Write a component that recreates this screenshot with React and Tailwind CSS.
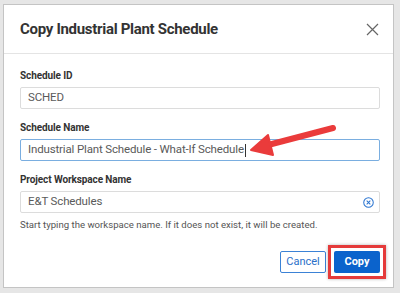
import React from 'react';

function Field({ label, value, focused, clearable, caret }) {
  return (
    <div className="flex flex-col">
      <label className="text-[10px] font-bold text-[#333] leading-[14px] mb-[4px] tracking-[-0.1px]">{label}</label>
      <div
        className={`h-[22px] flex items-center pl-[7px] pr-[5px] border rounded-[2px] ${
          focused ? 'border-[#7aaee0]' : 'border-[#dcdcdc]'
        }`}
      >
        <span className="text-[11.5px] text-[#5a5a5a] leading-none whitespace-nowrap tracking-[-0.15px]">{value}</span>
        {caret && <span className="w-px h-[13px] bg-[#333] ml-px" />}
        {clearable && (
          <svg className="ml-auto" width="11" height="11" viewBox="0 0 12 12" fill="none">
            <circle cx="6" cy="6" r="5.2" stroke="#2a74d0" strokeWidth="1.1" />
            <path d="M4 4L8 8M8 4L4 8" stroke="#2a74d0" strokeWidth="1.1" />
          </svg>
        )}
      </div>
    </div>
  );
}

export default function App() {
  return (
    <div
      className="w-[400px] h-[293px] bg-[#e6e6e6] pl-[3px] pt-[4px] pr-[6px] pb-[5px] overflow-hidden"
      style={{ fontFamily: 'Roboto, "Liberation Sans", sans-serif' }}
    >
      <div className="relative w-[391px] h-[284px] bg-white border border-[#c4c4c4] flex flex-col">
        {/* Header */}
        <div className="h-[49px] flex items-center justify-between pl-[16px] pr-[14px] border-b border-[#e4e4e4]">
          <h2 className="text-[15px] font-bold text-[#333] tracking-[-0.3px]">Copy Industrial Plant Schedule</h2>
          <svg width="13" height="13" viewBox="0 0 13 13">
            <path d="M1 1L12 12M12 1L1 12" stroke="#666" strokeWidth="1.2" />
          </svg>
        </div>

        {/* Body */}
        <div className="flex flex-col gap-[12px] pl-[16px] pr-[13px] pt-[15px]">
          <Field label="Schedule ID" value="SCHED" />
          <Field label="Schedule Name" value="Industrial Plant Schedule - What-If Schedule" focused caret />
          <div className="flex flex-col">
            <Field label="Project Workspace Name" value="E&T Schedules" clearable />
            <p className="text-[9.6px] text-[#555] mt-[6px] leading-[12px]">
              Start typing the workspace name. If it does not exist, it will be created.
            </p>
          </div>
        </div>

        {/* Footer */}
        <div className="mt-auto flex justify-end items-center gap-[8px] pr-[13px] pb-[14px]">
          <button className="w-[46px] h-[22px] border border-[#3b82d6] rounded-[2px] text-[11px] text-[#2a6fc9] bg-white">
            Cancel
          </button>
          <div className="border-[3px] border-[#e53b3b] p-[3px] -m-[6px] shadow-[0_0_3px_rgba(0,0,0,0.3)]">
            <button className="w-[46px] h-[22px] rounded-[2px] text-[11px] font-bold text-white bg-[#0b63cc] block">
              Copy
            </button>
          </div>
        </div>

        {/* Annotation arrow */}
        <svg className="absolute left-0 top-0 pointer-events-none" width="391" height="284">
          <path d="M329 123 L264 140" stroke="#ea3b3b" strokeWidth="6" strokeLinecap="round" />
          <path d="M247 145 L264 130 L269 150 Z" fill="#ea3b3b" stroke="#ea3b3b" strokeWidth="2" strokeLinejoin="round" />
        </svg>
      </div>
    </div>
  );
}
